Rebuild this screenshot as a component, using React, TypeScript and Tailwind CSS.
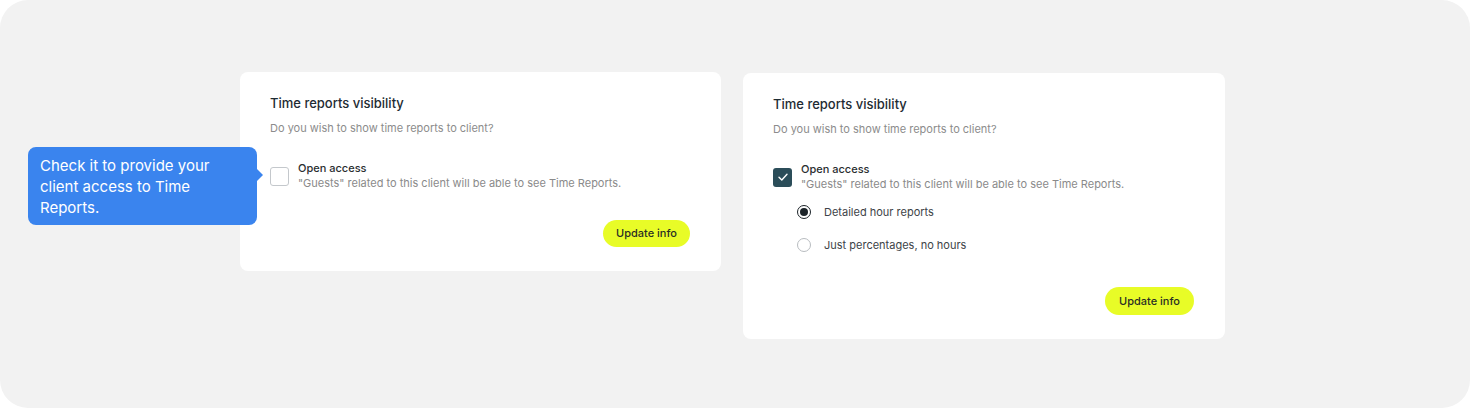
import React from 'react';

const font = { fontFamily: 'Inter, "Noto Sans", sans-serif' };

function Checkbox({ checked }: { checked?: boolean }) {
  if (checked) {
    return (
      <div className="w-[19px] h-[19px] shrink-0 rounded-[3px] bg-[#2b4d59] flex items-center justify-center">
        <svg width="12" height="12" viewBox="0 0 12 12" fill="none">
          <path d="M2 6.2 4.8 9 10 3.2" stroke="white" strokeWidth="1.4" strokeLinecap="round" strokeLinejoin="round" />
        </svg>
      </div>
    );
  }
  return <div className="w-[19px] h-[19px] shrink-0 rounded-[3px] border border-[#c4c8cc] bg-white" />;
}

function Radio({ checked, label }: { checked?: boolean; label: string }) {
  return (
    <div className="flex items-center gap-[13px] h-5">
      {checked ? (
        <div className="w-[14px] h-[14px] rounded-full border-[1.5px] border-[#1b2328] flex items-center justify-center">
          <div className="w-[8px] h-[8px] rounded-full bg-[#1b2328]" />
        </div>
      ) : (
        <div className="w-[14px] h-[14px] rounded-full border border-[#b8bcc0] bg-white" />
      )}
      <span className="text-[11px] text-[#3d4347]">{label}</span>
    </div>
  );
}

function VisibilityCard({ checked }: { checked?: boolean }) {
  return (
    <div className={`${checked ? 'w-[482px]' : 'w-[481px]'} bg-white rounded-lg pt-[21px] pb-6 pl-[30px] pr-[31px]`}>
      <h3 className="text-[13px] leading-5 font-medium text-[#1e2b33]">Time reports visibility</h3>
      <p className="mt-[7px] text-[11px] leading-4 text-[#8c8c8c]">Do you wish to show time reports to client?</p>
      <div className="mt-[25px] flex items-center gap-[9px]">
        <Checkbox checked={checked} />
        <div>
          <div className="text-[11px] leading-[15px] font-medium text-[#2a2e30]">Open access</div>
          <div className="text-[11px] leading-[15px] text-[#8a8a8a]">
            "Guests" related to this client will be able to see Time Reports.
          </div>
        </div>
      </div>
      {checked && (
        <div className="mt-[10px] pl-6 flex flex-col gap-[13px]">
          <Radio checked label="Detailed hour reports" />
          <Radio label="Just percentages, no hours" />
        </div>
      )}
      <div className={`${checked ? 'mt-[32px]' : 'mt-[29px]'} flex justify-end`}>
        <button className={`${checked ? 'h-[28px] px-[14px]' : 'h-[27px] px-[13px]'} rounded-full bg-[#e8fc27] text-[11px] font-medium text-[#2a2f25]`}>
          Update info
        </button>
      </div>
    </div>
  );
}

export default function App() {
  return (
    <div className="w-full h-[408px] bg-white" style={font}>
      <div className="h-full rounded-[28px] bg-[#f2f2f2] flex items-start pl-[240px] pt-[72px] gap-[22px]">
        <div className="relative">
          <div className="absolute left-[-212px] top-[75px] w-[229px] h-[78px] rounded-lg bg-[#3a84ee] pl-3 pt-2 text-[15px] leading-[21px] text-white">
            Check it to provide your
            <br />
            client access to Time
            <br />
            Reports.
            <div className="absolute right-[-6px] top-[22px] w-0 h-0 border-y-[6px] border-y-transparent border-l-[6px] border-l-[#3a84ee]" />
          </div>
          <VisibilityCard />
        </div>
        <div className="mt-px">
          <VisibilityCard checked />
        </div>
      </div>
    </div>
  );
}
